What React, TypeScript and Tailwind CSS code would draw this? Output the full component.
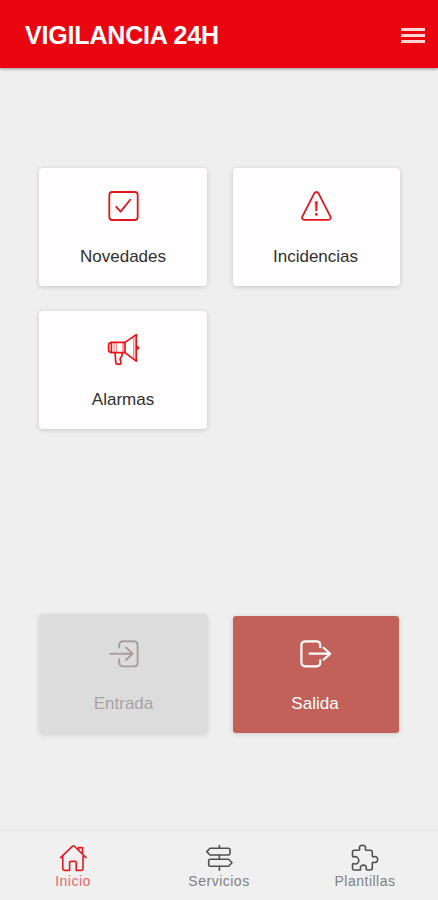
import React from 'react';
import clsx from 'clsx';

type IconProps = { className?: string };

const strokeProps = {
  fill: 'none',
  stroke: 'currentColor',
  strokeLinecap: 'round' as const,
  strokeLinejoin: 'round' as const,
};

function CheckIcon({ className }: IconProps) {
  return (
    <svg viewBox="0 0 36 36" className={className} strokeWidth={1.8} {...strokeProps}>
      <rect x="4.3" y="4" width="28.4" height="28" rx="3" />
      <path d="M11.2 18.8l4.4 4.8 9.6-11.8" />
    </svg>
  );
}

function WarningIcon({ className }: IconProps) {
  return (
    <svg viewBox="0 0 36 36" className={className} strokeWidth={1.8} {...strokeProps}>
      <path d="M16.4 5.2c.9-1.6 3.1-1.6 4 0l12 23.4c.8 1.6-.2 3.3-2 3.3H6.3c-1.8 0-2.8-1.7-2-3.3z" />
      <path d="M17.4 13.6h2l-.5 9.4h-1z" fill="currentColor" strokeWidth={0.6} />
      <circle cx="18.4" cy="26.4" r="1.3" fill="currentColor" stroke="none" />
    </svg>
  );
}

function MegaphoneIcon({ className }: IconProps) {
  return (
    <svg viewBox="0 0 36 36" className={className} strokeWidth={1.7} {...strokeProps}>
      <path d="M6.4 11.4H20v10.2H6.4z" />
      <path d="M6.4 11.6c-1.8 0-2.8 1-2.8 2.6v4.6c0 1.6 1 2.6 2.8 2.6" />
      <path d="M9.2 11.6v9.8M11.4 11.6v9.8" strokeWidth={0.5} />
      <path d="M18 11.6v9.8" strokeWidth={0.8} />
      <path d="M20 11.4L31.2 3.6v26.6L20 21.6" />
      <path d="M28.8 6v21.6" strokeWidth={0.7} />
      <path d="M32 15c2.4.2 2.4 3.4 0 3.6z" fill="currentColor" strokeWidth={1} />
      <path d="M10 21.8l.8 9.6c.1 1.2.7 1.8 1.7 1.8h1.9c1.1 0 1.7-.8 1.500-1.800l-.8-3.600 1.900-3.200v-2.800" />
    </svg>
  );
}

function EnterIcon({ className }: IconProps) {
  return (
    <svg viewBox="0 0 36 36" className={className} strokeWidth={1.9} {...strokeProps}>
      <path d="M13.2 11.6V9.2c0-2.4 1.4-4 3.8-4h10.6c2.4 0 4 1.6 4 4v17.2c0 2.4-1.6 4-4 4H17c-2.4 0-3.8-1.6-3.8-4V23" />
      <path d="M4.4 17.7h22M20 11.4l6.6 6.3-6.6 6.3" />
    </svg>
  );
}

function ExitIcon({ className }: IconProps) {
  return (
    <svg viewBox="0 0 36 36" className={className} strokeWidth={2.2} {...strokeProps}>
      <path d="M23.2 11.2V9c0-2.2-1.4-3.7-3.6-3.7h-11C6.2 5.3 4.4 6.9 4.4 9.3v17c0 2.4 1.8 4 4.2 4h11c2.2 0 3.6-1.5 3.6-3.7v-2.2" />
      <path d="M12.6 17.7H33M26.6 11.8l6.6 5.9-6.6 5.9" />
    </svg>
  );
}

function HomeIcon({ className }: IconProps) {
  return (
    <svg viewBox="0 0 30 30" className={className} strokeWidth={1.6} {...strokeProps}>
      <path d="M2.6 14.6l12-11.4c.5-.5 1.3-.5 1.8 0L28 14.6M4.8 13.2v12.6c0 1 .6 1.6 1.6 1.6h5.2v-8c0-.6.4-1 1-1h4.6c.6 0 1 .4 1 1v8h5.200c1 0 1.600-.6 1.600-1.600V13.200M20.600 7V4.600h4v6.200" />
    </svg>
  );
}

function SignpostIcon({ className }: IconProps) {
  return (
    <svg viewBox="0 0 30 30" className={className} strokeWidth={1.6} {...strokeProps}>
      <path d="M6 5.2h18.4c1 0 1.6.5 1.6 1.4v4c0 .9-.6 1.4-1.6 1.4H6L2.8 8.6z" />
      <path d="M6.300 16.200H24.600l3.400 3.500-3.400 3.500H6.300c-1 0-1.600-.5-1.600-1.400v-4.200c0-.9.6-1.400 1.600-1.400z" />
      <path d="M15.4 2.6v2.2M15.4 12.4v3.4M15.4 23.6v3.6" />
    </svg>
  );
}

function PuzzleIcon({ className }: IconProps) {
  return (
    <svg viewBox="0 0 30 30" className={className} strokeWidth={1.6} {...strokeProps}>
      <path d="M2.5 9.2c0-1.2.7-1.9 1.9-1.9h4.2c1.2 0 1.2-.7.9-1.7C9 3.5 10.4 2.2 12.5 2.2s3.5 1.3 3 3.4c-.3 1-.3 1.7.9 1.7h4c1.2 0 1.9.7 1.9 1.9v3.6c0 1.1.7 1.3 1.7.9 2.1-.6 3.7.9 3.7 2.8s-1.6 3.5-3.7 2.9c-1-.4-1.7-.1-1.7.9v4.8c0 1.2-.7 1.900-1.900 1.900h-3.200c-1.100 0-1.300-.7-.9-1.700.6-1.900-1-3.200-2.900-3.200s-3.500 1.300-2.900 3.200c.4 1 .1 1.700-.9 1.700H4.400c-1.200 0-1.900-.7-1.900-1.900v-3.300c0-1.100.7-1.400 1.700-1 2.500.7 4.600-.8 4.600-3.200S6.700 13 4.200 13.800c-1 .4-1.700.1-1.700-1z" />
    </svg>
  );
}

type TileProps = {
  label: string;
  icon: React.ReactNode;
  className?: string;
};

function Tile({ label, icon, className }: TileProps) {
  return (
    <button className={clsx('flex flex-col items-center', className)}>
      {icon}
      <span className="text-[17px] leading-5">{label}</span>
    </button>
  );
}

const whiteTile =
  'h-[118px] gap-[23px] rounded-[4px] bg-[#fffdfd] pt-5 text-[#303030] shadow-[0_1px_5px_rgba(0,0,0,0.18)]';

const tabs = [
  { label: 'Inicio', Icon: HomeIcon, active: true },
  { label: 'Servicios', Icon: SignpostIcon, active: false },
  { label: 'Plantillas', Icon: PuzzleIcon, active: false },
];

export default function App() {
  return (
    <div className="flex h-[900px] w-[438px] flex-col overflow-hidden bg-[#efefef] font-['Liberation_Sans',Arial,sans-serif]">
      {/* Top bar */}
      <header className="flex h-[68px] shrink-0 items-center justify-between bg-[#e90610] pr-[13px] pl-[25px] pt-[3px] shadow-[0_1px_3px_rgba(0,0,0,0.4)]">
        <h1 className="text-[25px] font-bold tracking-[-0.18px] text-white">VIGILANCIA 24H</h1>
        <button className="flex w-6 flex-col gap-[3px]">
          <span className="h-[3px] bg-[#ffd5d5]" />
          <span className="h-[3px] bg-[#ffd5d5]" />
          <span className="h-[3px] bg-[#ffd5d5]" />
        </button>
      </header>

      <main className="flex flex-1 flex-col pr-[38px] pl-[39px]">
        <div className="mt-[100px] grid grid-cols-[168px_167px] gap-x-[26px] gap-y-[25px]">
          <Tile label="Novedades" className={whiteTile} icon={<CheckIcon className="size-9 text-[#e0161c]" />} />
          <Tile
            label="Incidencias"
            className={clsx(whiteTile, 'pr-[2px]')}
            icon={<WarningIcon className="size-9 text-[#e0161c]" />}
          />
          <Tile label="Alarmas" className={whiteTile} icon={<MegaphoneIcon className="size-9 text-[#ee1118]" />} />
        </div>

        {/* Clock in / clock out */}
        <div className="mt-[185px] grid grid-cols-[169px_166px] items-center gap-x-[25px]">
          <Tile
            label="Entrada"
            className="h-[120px] gap-[22px] rounded-[4px] bg-[#dcdcdc] pt-[22px] text-[#aaa3a3] shadow-[0_1px_5px_rgba(0,0,0,0.12)]"
            icon={<EnterIcon className="size-9 text-[#a99d9d]" />}
          />
          <Tile
            label="Salida"
            className="h-[117px] gap-[22px] rounded-[3px] bg-[#c16159] pt-5 pr-[2px] text-white shadow-[0_1px_5px_rgba(0,0,0,0.15)]"
            icon={<ExitIcon className="size-9 text-white" />}
          />
        </div>
      </main>

      <nav className="grid h-[70px] shrink-0 grid-cols-3 border-t border-[#e5e5e5] bg-[#f0f0f0]">
        {tabs.map(({ label, Icon, active }) => (
          <button
            key={label}
            className={clsx('flex flex-col items-center pt-3', active ? 'text-[#df1c22]' : 'text-[#505050]')}
          >
            <Icon className="size-[30px]" />
            <span
              className={clsx(
                'text-[14px] leading-4 tracking-[0.5px]',
                active ? 'text-[#e5656a]' : 'text-[#808080]'
              )}
            >
              {label}
            </span>
          </button>
        ))}
      </nav>
    </div>
  );
}
